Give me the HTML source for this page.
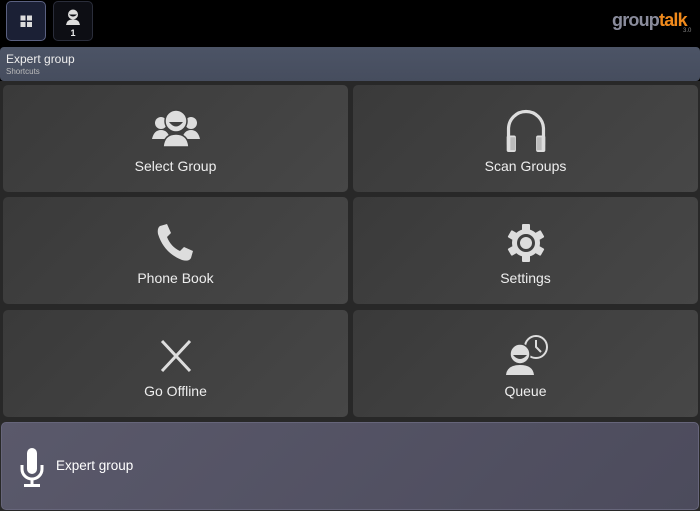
<!DOCTYPE html>
<html><head><meta charset="utf-8"><style>
*{margin:0;padding:0;box-sizing:border-box}
body{width:700px;height:511px;background:#000;font-family:"Liberation Sans",sans-serif;position:relative;overflow:hidden}
.btn{position:absolute;top:1px;width:40px;height:40px;border-radius:5px}
.hdr{position:absolute;left:0;top:47px;width:700px;height:34px;background:linear-gradient(#4c5466,#464d5e);border-radius:4px}
.main{position:absolute;left:0;top:81px;width:700px;height:430px;background:#282828}
.tile{position:absolute;width:345px;height:107px;border-radius:5px;background:linear-gradient(135deg,#3a3a3a,#474747);color:#eee;font-size:14px;text-align:center}
.tile span{position:absolute;left:0;right:0;top:73px}
.tile svg{position:absolute;left:50%;transform:translateX(-50%);top:18px}
</style></head><body>
<div class="btn" style="left:6px;background:#1b2035;border:1.5px solid #5a6080">
<svg width="40" height="40" style="position:absolute;left:-1px;top:-1px"><g fill="#ddd"><rect x="14.5" y="14.5" width="5" height="5"/><rect x="21" y="14.5" width="5" height="5"/><rect x="14.5" y="21" width="5" height="5"/><rect x="21" y="21" width="5" height="5"/></g></svg></div>
<div class="btn" style="left:53px;background:#0d0e14;border:1.5px solid #2a2d3a">
<svg width="40" height="40" style="position:absolute;left:-1px;top:-1px"><circle cx="20" cy="13.5" r="5" fill="#ddd"/><path d="M16 13.5 Q20 17.5 24 13.5Z" fill="#0d0e14"/><path d="M13 24 Q14 18 20 18.5 Q26 18 27 24Z" fill="#ddd"/><text x="20" y="35" fill="#eee" font-size="9" font-weight="bold" text-anchor="middle" font-family="Liberation Sans">1</text></svg></div>
<div style="position:absolute;left:612px;top:10px;font-size:18px;font-weight:bold;letter-spacing:-0.8px;color:#8a8c9c">group<span style="color:#f08a1c">talk</span></div>
<div style="position:absolute;left:683px;top:28px;font-size:6px;color:#888">3.0</div>
<div class="hdr"><div style="position:absolute;left:6px;top:5px;color:#eee;font-size:12px">Expert group</div><div style="position:absolute;left:6px;top:20px;color:#bbb;font-size:8px">Shortcuts</div></div>
<div class="main"></div>
<div class="tile" style="left:3px;top:85px"><svg width="50" height="50" viewBox="0 0 50 50" style="top:16px;"><g fill="#ddd"><circle cx="10" cy="22" r="6"/><circle cx="40" cy="22" r="6"/><path d="M1 38 Q3 29 10 29 Q17 29 19 38Z"/><path d="M31 38 Q33 29 40 29 Q47 29 49 38Z"/></g><circle cx="25" cy="20" r="11" fill="#ddd" stroke="#3e3e3e" stroke-width="1.5"/><path d="M18 21 Q25 30 32 21Z" fill="#3e3e3e"/><path d="M12 46 Q13 33 25 33 Q37 33 38 46Z" fill="#ddd" stroke="#3e3e3e" stroke-width="1.5"/></svg><span>Select Group</span></div>
<div class="tile" style="left:353px;top:85px"><svg width="46" height="46" viewBox="0 0 50 50" style="top:21px"><path d="M6 42 V25 A19 19 0 0 1 44 25 V42" fill="none" stroke="#ddd" stroke-width="3.5"/><rect x="4" y="32" width="10" height="18" rx="2" fill="#ddd"/><rect x="36" y="32" width="10" height="18" rx="2" fill="#ddd"/><rect x="8" y="34" width="5" height="14" fill="#bbb"/><rect x="37" y="34" width="5" height="14" fill="#bbb"/></svg><span>Scan Groups</span></div>
<div class="tile" style="left:3px;top:197px"><svg width="40" height="40" viewBox="0 0 40 40" style="top:26px"><path d="M4 3 L11 1 L15 10 L11 14 Q15 24 24 28 L28 24 L37 28 L35 35 Q33 39 26 37 Q8 30 2 11 Q1 5 4 3Z" fill="#ddd"/></svg><span>Phone Book</span></div>
<div class="tile" style="left:353px;top:197px"><svg width="40" height="40" viewBox="0 0 40 40" style="top:26px"><g fill="#ddd" transform="translate(20 20)"><circle r="14"/><g><rect x="-4" y="-19" width="8" height="8" rx="1"/><rect x="-4" y="-19" width="8" height="8" rx="1" transform="rotate(60)"/><rect x="-4" y="-19" width="8" height="8" rx="1" transform="rotate(120)"/><rect x="-4" y="-19" width="8" height="8" rx="1" transform="rotate(180)"/><rect x="-4" y="-19" width="8" height="8" rx="1" transform="rotate(240)"/><rect x="-4" y="-19" width="8" height="8" rx="1" transform="rotate(300)"/></g></g><circle cx="20" cy="20" r="7.5" fill="none" stroke="#404040" stroke-width="3"/></svg><span>Settings</span></div>
<div class="tile" style="left:3px;top:310px"><svg width="40" height="40" viewBox="0 0 40 40" style="top:26px"><path d="M6 5 L34 35 M34 5 L6 35" stroke="#ddd" stroke-width="3"/></svg><span>Go Offline</span></div>
<div class="tile" style="left:353px;top:310px"><svg width="50" height="44" viewBox="0 0 50 44" style="top:22px"><circle cx="35" cy="15" r="11" fill="none" stroke="#ddd" stroke-width="2"/><path d="M35 8 V15 L40 20" fill="none" stroke="#ddd" stroke-width="2"/><circle cx="19" cy="22" r="10" fill="#ddd" stroke="#414141" stroke-width="1.5"/><path d="M12 23 Q19 31 26 23Z" fill="#414141"/><path d="M5 43 Q6 33 19 33 Q32 33 33 43Z" fill="#ddd"/></svg><span>Queue</span></div>
<div style="position:absolute;left:1px;top:422px;width:698px;height:88px;border-radius:5px;background:linear-gradient(135deg,#5a596b,#4c4b5c);border:1px solid #66657a"></div>
<svg width="30" height="42" viewBox="0 0 30 42" style="position:absolute;left:17px;top:447px"><rect x="10" y="1" width="10" height="26" rx="5" fill="#fff"/><path d="M5 18 V22 A10 10 0 0 0 25 22 V18" fill="none" stroke="#fff" stroke-width="3"/><rect x="13.5" y="31" width="3" height="7" fill="#fff"/><rect x="7" y="37" width="16" height="3" fill="#fff"/></svg>
<div style="position:absolute;left:56px;top:458px;color:#fff;font-size:13.5px">Expert group</div>
</body></html>
